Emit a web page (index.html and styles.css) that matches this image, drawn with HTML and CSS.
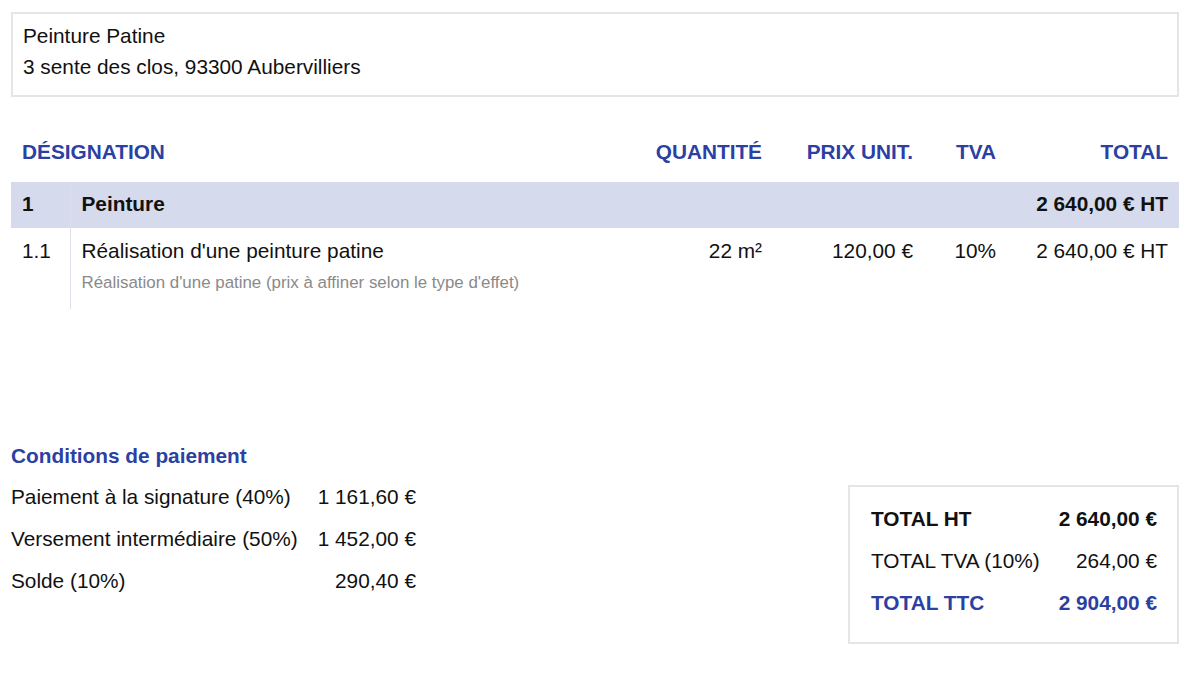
FILE: index.html
```html
<!DOCTYPE html>
<html lang="fr">
<head>
  <meta charset="UTF-8" />
  <title>Devis - Peinture Patine</title>
  <link rel="stylesheet" href="styles.css">
</head>
<body>
  <div class="page">
    <div class="client">
      <div>Peinture Patine</div>
      <div>3 sente des clos, 93300 Aubervilliers</div>
    </div>

    <table class="lines">
      <colgroup>
        <col class="c-num">
        <col>
        <col class="c-qty">
        <col class="c-price">
        <col class="c-tva">
        <col class="c-total">
      </colgroup>
      <thead>
        <tr>
          <th class="num-head" colspan="2">DÉSIGNATION</th>
          <th class="qty">QUANTITÉ</th>
          <th class="price">PRIX UNIT.</th>
          <th class="tva">TVA</th>
          <th class="total">TOTAL</th>
        </tr>
      </thead>
      <tbody>
        <tr class="section">
          <td class="num">1</td>
          <td class="label">Peinture</td>
          <td></td>
          <td></td>
          <td></td>
          <td class="total">2 640,00 € HT</td>
        </tr>
        <tr class="item">
          <td class="num">1.1</td>
          <td class="label">
            Réalisation d'une peinture patine
            <div class="desc">Réalisation d'une patine (prix à affiner selon le type d'effet)</div>
          </td>
          <td class="qty">22 m²</td>
          <td class="price">120,00 €</td>
          <td class="tva">10%</td>
          <td class="total">2 640,00 € HT</td>
        </tr>
      </tbody>
    </table>

    <div class="bottom">
      <div class="conditions">
        <h2>Conditions de paiement</h2>
        <table class="pay">
          <tr><td>Paiement à la signature (40%)</td><td class="amount">1 161,60 €</td></tr>
          <tr><td>Versement intermédiaire (50%)</td><td class="amount">1 452,00 €</td></tr>
          <tr><td>Solde (10%)</td><td class="amount">290,40 €</td></tr>
        </table>
      </div>

      <div class="totals">
        <div class="row strong"><span>TOTAL HT</span><span>2 640,00 €</span></div>
        <div class="row"><span>TOTAL TVA (10%)</span><span>264,00 €</span></div>
        <div class="row strong blue"><span>TOTAL TTC</span><span>2 904,00 €</span></div>
      </div>
    </div>
  </div>
</body>
</html>
```

FILE: styles.css
```css
* {
  box-sizing: border-box;
}
body {
  font-family: "Liberation Sans", Arial, sans-serif;
  font-size: 20.8px;
  color: #111;
  background: #fff;
  margin: 0;
}
.page {
  padding: 12px 21px 0 11px;
}
.client {
  border: 2px solid #e3e5e9;
  padding: 6px 11px 13px 10px;
  line-height: 31px;
}
table.lines {
  width: 100%;
  table-layout: fixed;
  border-collapse: collapse;
  margin-top: 33px;
}
.c-num { width: 59px; }
.c-qty { width: 140px; }
.c-price { width: 151px; }
.c-tva { width: 83px; }
.c-total { width: 172px; }
.lines th {
  color: #2c3fa3;
  font-weight: bold;
  text-align: right;
  padding: 10px 11px 18px 11px;
  line-height: 24px;
  white-space: nowrap;
}
.lines th.num-head {
  text-align: left;
}
.lines td {
  padding: 0 11px;
  white-space: nowrap;
  vertical-align: top;
}
.lines td.num {
  border-right: 1px solid #dde0ea;
}
.lines .qty, .lines .price, .lines .tva, .lines .total {
  text-align: right;
}
.section td {
  background: #d5daec;
  font-weight: bold;
  padding-top: 10px;
  padding-bottom: 12px;
  line-height: 24px;
  vertical-align: middle;
}
.item td {
  padding-top: 11px;
  padding-bottom: 16px;
  line-height: 24px;
}
.desc {
  font-size: 16.9px;
  color: #8a8a8a;
  margin-top: 10px;
  line-height: 20px;
}
.bottom {
  display: flex;
  justify-content: space-between;
  align-items: flex-start;
  margin-top: 135px;
}
.conditions h2 {
  color: #2c3fa3;
  font-size: 20.8px;
  margin: 0 0 17px 0;
  line-height: 24px;
}
table.pay {
  border-collapse: collapse;
}
.pay td {
  padding: 0 0 18px 0;
  line-height: 24px;
}
.pay td.amount {
  text-align: right;
  padding-left: 20px;
}
.totals {
  width: 331px;
  border: 2px solid #e3e5e9;
  padding: 20px 20px 27px 21px;
  margin-top: 41px;
}
.totals .row {
  display: flex;
  justify-content: space-between;
  line-height: 24px;
  margin-bottom: 18px;
}
.totals .row:last-child {
  margin-bottom: 0;
}
.totals .strong {
  font-weight: bold;
}
.totals .blue {
  color: #2c3fa3;
}
```
